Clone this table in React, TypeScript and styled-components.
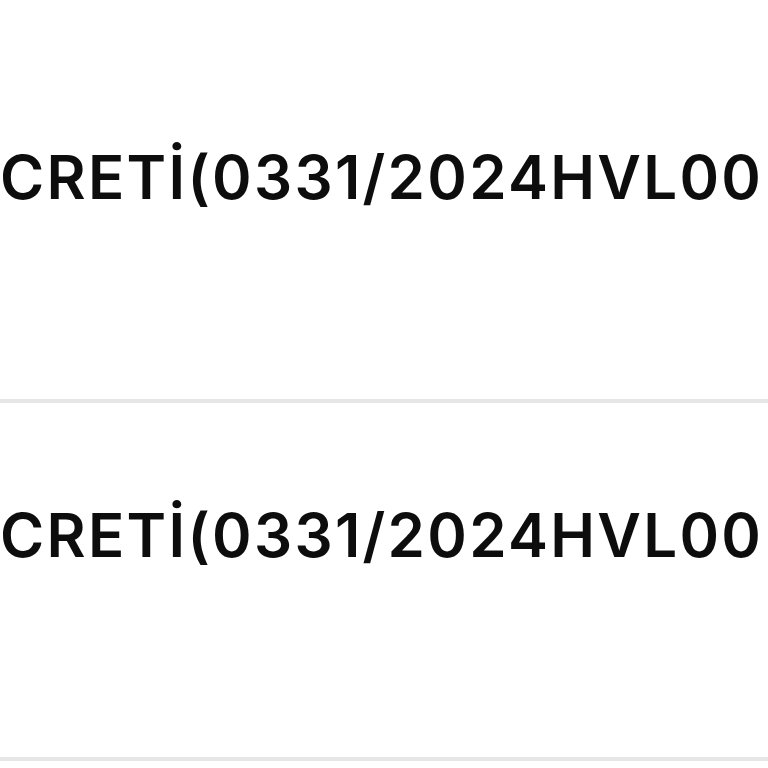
import React from "react";
import styled, { createGlobalStyle } from "styled-components";

const Global = createGlobalStyle`
  html, body { margin: 0; padding: 0; background: #ffffff; }
  body { font-family: Inter, "Noto Sans", sans-serif; overflow: hidden; }
`;

const List = styled.div`
  display: flex;
  flex-direction: column;
  padding-top: 45px;
  width: 768px;
  overflow: hidden;
`;

const Row = styled.div`
  box-sizing: border-box;
  height: 358px;
  padding-top: 102px;
  border-bottom: 4px solid #e6e6e6;
`;

const Label = styled.div`
  font-family: Inter, "Noto Sans", sans-serif;
  font-size: 60px;
  line-height: 1;
  font-weight: 600;
  letter-spacing: 2.3px;
  color: #0d0d0d;
  white-space: nowrap;
  margin-left: 0px;
`;

const rows = ["CRETİ(0331/2024HVL00", "CRETİ(0331/2024HVL00"];

export default function App() {
  return (
    <>
      <Global />
      <List>
        {rows.map((t, i) => (
          <Row key={i}>
            <Label>{t}</Label>
          </Row>
        ))}
      </List>
    </>
  );
}
